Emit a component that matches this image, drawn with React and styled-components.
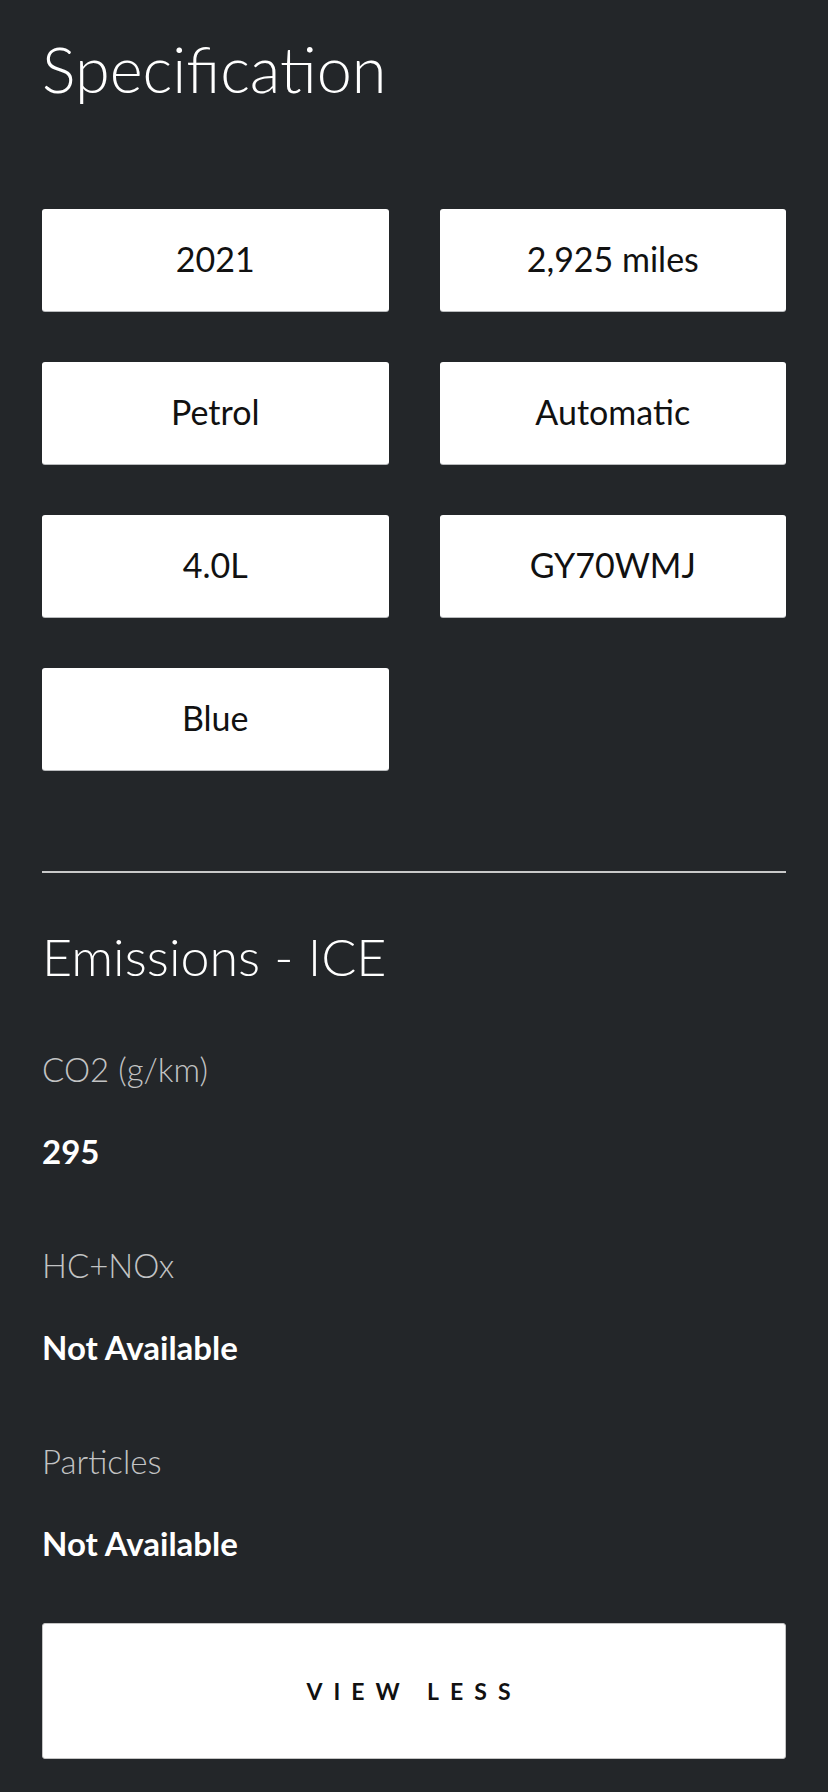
import styled, { createGlobalStyle } from 'styled-components';

const GlobalStyle = createGlobalStyle`
  html, body {
    margin: 0;
    padding: 0;
    background: #232629;
  }
  body {
    font-family: Lato, 'Open Sans', sans-serif;
    -webkit-font-smoothing: antialiased;
  }
`;

const Page = styled.main`
  min-height: 1792px;
  box-sizing: border-box;
  padding: 31px 42px 0;
  color: #fff;
`;

const Title = styled.h2`
  margin: 0;
  font-size: ${(p) => p.$size}px;
  font-weight: 300;
  line-height: 1.2;
  color: #fff;
`;

const SpecGrid = styled.div`
  display: grid;
  grid-template-columns: 1fr 1fr;
  gap: 51px;
  margin-top: 102px;
`;

const SpecTile = styled.div`
  height: 102px;
  display: flex;
  align-items: center;
  justify-content: center;
  background: #fff;
  border-radius: 3px;
  box-shadow: 0 1px 0 #b9bbbd;
  color: #111;
  font-size: 34px;
  font-weight: 400;
  line-height: 1.2;
`;

const Divider = styled.hr`
  margin: 101px 0 52px;
  border: 0;
  height: 2px;
  background: #c9c9c9;
`;

const EmissionList = styled.dl`
  margin: 63px 0 0;
  display: flex;
  flex-direction: column;
  gap: 75px;
`;

const Item = styled.div`
  display: flex;
  flex-direction: column;
  gap: 42px;
`;

const Label = styled.dt`
  font-size: 33px;
  font-weight: 300;
  line-height: 1.2;
  color: #c2c3c4;
`;

const Value = styled.dd`
  margin: 0;
  font-size: 33px;
  font-weight: 700;
  line-height: 1.2;
  color: #fff;
`;

const ToggleButton = styled.button`
  display: block;
  width: 100%;
  height: 136px;
  margin-top: 59px;
  background: #fff;
  border: 1px solid #c4c4c4;
  border-radius: 3px;
  color: #111;
  font-family: Lato, sans-serif;
  font-size: 23px;
  font-weight: 700;
  letter-spacing: 11px;
  text-transform: uppercase;
  cursor: pointer;
`;

const specs = ['2021', '2,925 miles', 'Petrol', 'Automatic', '4.0L', 'GY70WMJ', 'Blue'];

const emissions = [
  { label: 'CO2 (g/km)', value: '295' },
  { label: 'HC+NOx', value: 'Not Available' },
  { label: 'Particles', value: 'Not Available' },
];

const App = () => {
  return (
    <>
      <GlobalStyle />
      <Page>
        <Title $size={63}>Specification</Title>
        <SpecGrid>
          {specs.map((s) => (
            <SpecTile key={s}>{s}</SpecTile>
          ))}
        </SpecGrid>
        <Divider />
        <Title $size={52}>Emissions - ICE</Title>
        <EmissionList>
          {emissions.map((e) => (
            <Item key={e.label}>
              <Label>{e.label}</Label>
              <Value>{e.value}</Value>
            </Item>
          ))}
        </EmissionList>
        <ToggleButton type="button">View less</ToggleButton>
      </Page>
    </>
  );
};

export default App;
